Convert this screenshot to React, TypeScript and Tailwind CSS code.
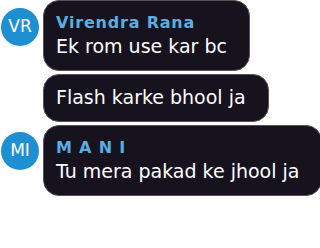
import React from 'react';

type Msg = { avatar?: string; name?: string; text: string };

const messages: Msg[] = [
  { avatar: 'VR', name: 'Virendra Rana', text: 'Ek rom use kar bc' },
  { text: 'Flash karke bhool ja' },
  { avatar: 'MI', name: 'M A N I', text: 'Tu mera pakad ke jhool ja' },
];

const App = () => {
  return (
    <div className="w-[320px] h-[248px] bg-white overflow-hidden font-['DejaVu_Sans',sans-serif]">
      <div className="flex flex-col gap-[3px] pl-px">
        {messages.map((m, i) => (
          <div key={i} className="flex items-start">
            <div className={`w-[42px] shrink-0 ${i === 0 ? 'pt-[8px]' : 'pt-[7px]'}`}>
              {m.avatar && (
                <div className="w-[38px] h-[38px] rounded-full bg-[#1f8fd4] flex items-center justify-center text-white text-[17px]">
                  {m.avatar}
                </div>
              )}
            </div>
            <div
              className={`rounded-[16px] bg-[#16131f] border border-[#55525a] pl-[12px] pr-[22px] text-white whitespace-nowrap ${
                m.name ? 'pt-[12px] pb-[10px]' : 'pt-[8px] pb-[10px]'
              }`}
            >
              {m.name && (
                <div className="text-[16px] font-bold leading-[19px] tracking-[0.8px] text-[#5aaee2]">{m.name}</div>
              )}
              <div className="text-[19px] leading-[28px]">{m.text}</div>
            </div>
          </div>
        ))}
      </div>
    </div>
  );
};

export default App;
